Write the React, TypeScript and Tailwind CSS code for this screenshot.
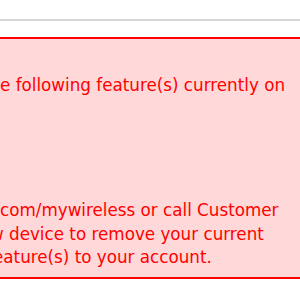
export default function App() {
  return (
    <div className="h-[300px] w-[300px] overflow-hidden bg-white font-['Verdana','DejaVu_Sans',sans-serif] text-[16.75px] leading-[23.5px] text-[#ff0000]">
      <div className="h-[19px]" />
      <div className="h-[2px] bg-[#d6d6d6]" />
      <div className="h-[16px]" />
      <div className="h-[242px] border-y-2 border-[#ff0000] bg-[#ffd9d9] pt-[35px]">
        <div className="whitespace-nowrap">e following feature(s) currently on</div>
        <div className="whitespace-nowrap">&nbsp;</div>
        <div className="mt-[78px] whitespace-nowrap">com/mywireless or call Customer</div>
        <div className="-ml-[10px] whitespace-nowrap">w device to remove your current</div>
        <div className="-ml-[7px] whitespace-nowrap">eature(s) to your account.</div>
      </div>
    </div>
  );
}
